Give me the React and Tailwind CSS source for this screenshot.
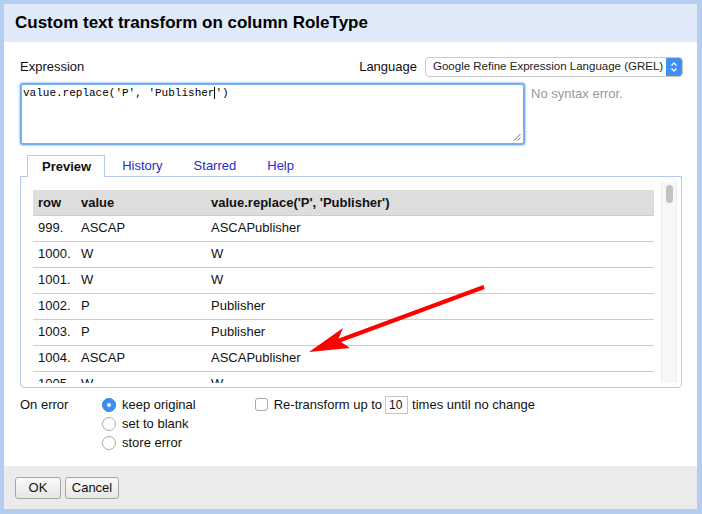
import React from 'react';

const rows = [
  ['999.', 'ASCAP', 'ASCAPublisher'],
  ['1000.', 'W', 'W'],
  ['1001.', 'W', 'W'],
  ['1002.', 'P', 'Publisher'],
  ['1003.', 'P', 'Publisher'],
  ['1004.', 'ASCAP', 'ASCAPublisher'],
  ['1005.', 'W', 'W'],
];

const Radio = ({ checked, label }) => (
  <div className="flex items-center h-[19px]">
    {checked ? (
      <span className="w-[14px] h-[14px] rounded-full bg-[#3b8ff2] border border-[#2f7fe0] flex items-center justify-center">
        <span className="w-[4px] h-[4px] rounded-full bg-white" />
      </span>
    ) : (
      <span className="w-[14px] h-[14px] rounded-full bg-white border border-[#a9a9a9]" />
    )}
    <span className="ml-[6px]">{label}</span>
  </div>
);

export default function App() {
  return (
    <div
      className="relative w-[702px] h-[514px] border-l-[4px] border-t-[4px] border-r-[5px] border-b-[5px] border-[#b5cdf0] bg-white flex flex-col text-[13px] text-[#111]"
      style={{ fontFamily: '"Liberation Sans", Arial, sans-serif' }}
    >
      {/* title */}
      <div className="h-[38px] bg-[#dfe9f8] flex items-center pl-[11px] shrink-0">
        <h1 className="text-[17px] font-bold text-black">Custom text transform on column RoleType</h1>
      </div>

      {/* body */}
      <div className="h-[424px] pl-[16px] pr-[14px] shrink-0">
        <div className="mt-[15px] h-[20px] flex items-center justify-between">
          <span>Expression</span>
          <div className="flex items-center">
            <span>Language</span>
            <div className="ml-[8px] w-[258px] h-[20px] flex items-center border border-[#c9c9c9] rounded-[4px] bg-white overflow-hidden">
              <span className="flex-1 pl-[7px] text-[11.5px] whitespace-nowrap text-[#222]">Google Refine Expression Language (GREL)</span>
              <span className="w-[16px] h-full bg-[#3d8ff4] flex items-center justify-center">
                <svg width="8" height="12" viewBox="0 0 8 12" fill="none" stroke="white" strokeWidth="1.4">
                  <path d="M1.5 4.5 L4 2 L6.5 4.5" />
                  <path d="M1.5 7.5 L4 10 L6.5 7.5" />
                </svg>
              </span>
            </div>
          </div>
        </div>

        <div className="mt-[6px] flex items-start">
          <div className="relative w-[505px] h-[62px] border-[2px] border-[#79adf0] rounded-[3px] shadow-[0_0_2px_1px_#b9d4f7] bg-white">
            <div className="pl-[1px] pt-[2px] text-[11px] leading-[13px] text-black" style={{ fontFamily: '"Liberation Mono", "Courier New", monospace' }}>
              value.replace('P', 'Publisher<span className="inline-block w-px h-[12px] bg-black align-middle" />')
            </div>
            <svg className="absolute right-[2px] bottom-[2px]" width="8" height="8" viewBox="0 0 8 8" stroke="#777" strokeWidth="1">
              <path d="M7.5 1 L1 7.5" />
              <path d="M7.5 4.5 L4.5 7.5" />
            </svg>
          </div>
          <span className="ml-[6px] mt-[1px] text-[#999]">No syntax error.</span>
        </div>

        {/* tabs */}
        <div className="mt-[10px] ml-[7px] flex items-end gap-[3px] h-[22px] relative z-10">
          <div className="h-[22px] pl-[14px] pr-[13px] flex items-center font-bold border border-b-0 border-[#b3c9f0] bg-white">Preview</div>
          <div className="h-[22px] px-[14px] flex items-center text-[#2a2ac8]">History</div>
          <div className="h-[22px] px-[14px] flex items-center text-[#2a2ac8]">Starred</div>
          <div className="h-[22px] px-[14px] flex items-center text-[#2a2ac8]">Help</div>
        </div>

        {/* panel */}
        <div className="-mt-px w-[662px] h-[212px] border border-[#b3c9f0] rounded-b-[4px] pl-[12px] pt-[5px] pr-[4px] pb-[4px]">
          <div className="h-full flex">
            <div className="flex-1 overflow-hidden pt-[8px]">
              <table className="w-[621px] border-collapse text-left">
                <thead>
                  <tr className="h-[25px] bg-[#dddddd] border-b border-[#cccccc]">
                    <th className="w-[48px] pl-[5px] font-bold">row</th>
                    <th className="w-[130px] font-bold">value</th>
                    <th className="font-bold">value.replace('P', 'Publisher')</th>
                  </tr>
                </thead>
                <tbody>
                  {rows.map((r) => (
                    <tr key={r[0]} className="h-[26px] border-b border-[#cccccc]">
                      <td className="pl-[5px]">{r[0]}</td>
                      <td>{r[1]}</td>
                      <td>{r[2]}</td>
                    </tr>
                  ))}
                </tbody>
              </table>
            </div>
            <div className="w-[16px] h-full bg-[#f7f7f7] border-l border-r border-[#ececec] flex justify-center pt-[3px]">
              <div className="w-[7px] h-[18px] rounded-full bg-[#c2c2c2]" />
            </div>
          </div>
        </div>

        {/* on error */}
        <div className="mt-[7px] flex">
          <div className="w-[82px] h-[19px] flex items-center">On error</div>
          <div className="flex flex-col">
            <Radio checked label="keep original" />
            <Radio label="set to blank" />
            <Radio label="store error" />
          </div>
          <div className="ml-[59px] h-[19px] flex items-center">
            <span className="w-[13px] h-[13px] border border-[#a9a9a9] rounded-[3px] bg-white" />
            <span className="ml-[6px]">Re-transform up to</span>
            <span className="ml-[3px] w-[23px] h-[18px] border border-[#c4c4c4] flex items-center pl-[3px] text-[12px]">10</span>
            <span className="ml-[4px]">times until no change</span>
          </div>
        </div>
      </div>

      {/* footer */}
      <div className="h-[43px] bg-[#ebebeb] shrink-0 flex items-start pl-[11px] pt-[11px] gap-[4px]">
        <button className="w-[46px] h-[22px] border border-[#a6a6a6] rounded-[3px] bg-gradient-to-b from-[#fafafa] to-[#e6e6e6] text-[13px] text-[#111]">OK</button>
        <button className="w-[54px] h-[22px] border border-[#a6a6a6] rounded-[3px] bg-gradient-to-b from-[#fafafa] to-[#e6e6e6] text-[13px] text-[#111]">Cancel</button>
      </div>

      {/* annotation arrow */}
      <svg className="absolute left-[-4px] top-[-4px] pointer-events-none" width="702" height="514" viewBox="0 0 702 514">
        <line x1="484" y1="287" x2="338" y2="341" stroke="#ff0000" strokeWidth="4" />
        <polygon points="309,352 343,328 338,340 350,348" fill="#ff0000" />
      </svg>
    </div>
  );
}
